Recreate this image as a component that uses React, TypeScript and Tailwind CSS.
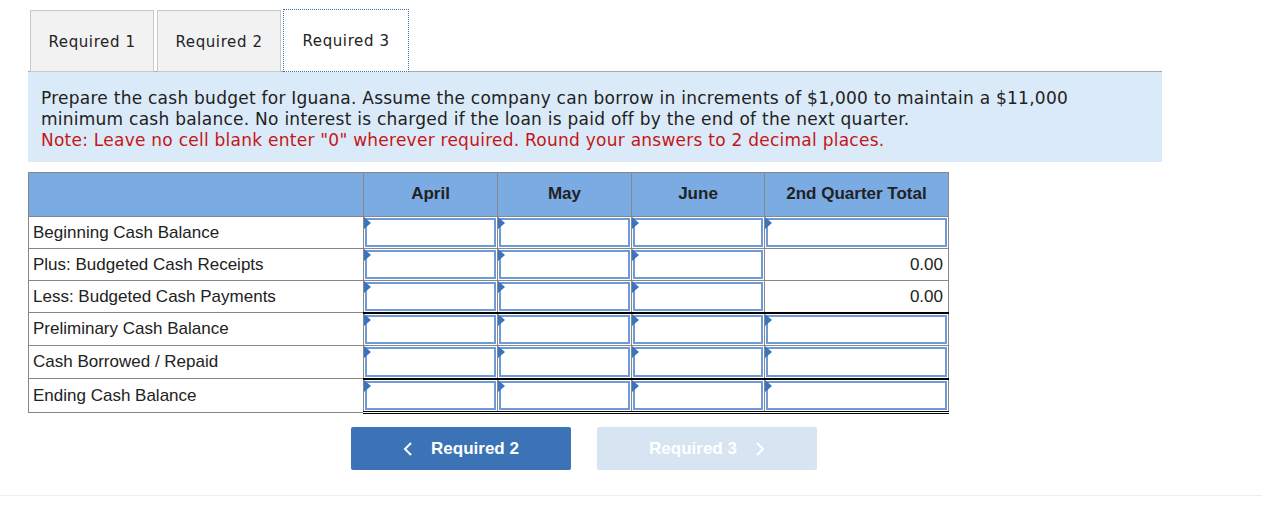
import React from "react";

const verdana = { fontFamily: '"DejaVu Sans", Verdana, sans-serif' };

function Flag() {
  return (
    <span className="absolute left-0 top-0 h-0 w-0 border-y-[6px] border-l-[7px] border-y-transparent border-l-[#3a73c0]" />
  );
}

function InputCell() {
  return (
    <div className="relative h-full p-px">
      <div className="h-full border-2 border-[#6e9ad8] bg-white" />
      <Flag />
    </div>
  );
}

const rows: { label: string; total: string | null; top?: boolean; h: string }[] = [
  { label: "Beginning Cash Balance", total: null, h: "h-[32px]" },
  { label: "Plus: Budgeted Cash Receipts", total: "0.00", h: "h-[32px]" },
  { label: "Less: Budgeted Cash Payments", total: "0.00", h: "h-[32px]" },
  { label: "Preliminary Cash Balance", total: null, top: true, h: "h-[33px]" },
  { label: "Cash Borrowed / Repaid", total: null, h: "h-[33px]" },
  { label: "Ending Cash Balance", total: null, top: true, h: "h-[34px]" },
];

export default function App() {
  return (
    <div className="relative min-h-[506px] w-[1262px] bg-white" style={{ fontFamily: '"Liberation Sans", Arial, sans-serif' }}>
      <div className="pl-[28px] pr-[100px] pt-[10px]">
        {/* tabs */}
        <div className="flex h-[62px] items-end border-b border-[#a9a9a9] pl-[2px] tracking-[0.6px]" style={verdana}>
          <div className="mb-[-1px] flex h-[62px] w-[124px] items-center justify-center border border-[#c9c9c9] bg-[#f2f2f2] pt-[3px] text-[15px] text-[#222]">
            Required 1
          </div>
          <div className="mb-[-1px] ml-[3px] flex h-[62px] w-[124px] items-center justify-center border border-[#c9c9c9] bg-[#f2f2f2] pt-[3px] text-[15px] text-[#222]">
            Required 2
          </div>
          <div className="mb-[-1px] ml-[2px] flex h-[63px] w-[126px] items-center justify-center border border-dotted border-[#3a6fb5] bg-white pt-[2px] text-[15px] text-[#222]">
            Required 3
          </div>
        </div>

        {/* instructions */}
        <div className="h-[90px] bg-[#dbeaf8] px-[13px] pt-[16px] text-[17px] leading-[21px] tracking-[0.25px] text-[#222]" style={verdana}>
          <p>
            Prepare the cash budget for Iguana. Assume the company can borrow in increments of $1,000 to maintain a $11,000
            <br />
            minimum cash balance. No interest is charged if the loan is paid off by the end of the next quarter.
          </p>
          <p className="text-[#c41616]">
            Note: Leave no cell blank enter "0" wherever required. Round your answers to 2 decimal places.
          </p>
        </div>

        {/* table */}
        <table className="mt-[10px] w-[920px] table-fixed border-collapse text-[17px] text-[#222]">
          <colgroup>
            <col className="w-[335px]" />
            <col className="w-[134px]" />
            <col className="w-[134px]" />
            <col className="w-[133px]" />
            <col className="w-[184px]" />
          </colgroup>
          <thead>
            <tr className="h-[44px] bg-[#7aabe2]">
              <th className="border border-[#888]" />
              {["April", "May", "June", "2nd Quarter Total"].map((h) => (
                <th key={h} className="border border-[#888] pb-[2px] align-middle font-bold">
                  {h}
                </th>
              ))}
            </tr>
          </thead>
          <tbody>
            {rows.map((r, i) => {
              const cellCls =
                r.h +
                " border border-[#888] p-0 " +
                (r.top ? "border-t-2 border-t-black " : "") +
                (i === 5 ? "border-b-[3px] border-double border-b-black" : "");
              return (
                <tr key={r.label} className={r.h}>
                  <td className="border border-[#888] pl-[4px] align-middle">{r.label}</td>
                  {[0, 1, 2].map((c) => (
                    <td key={c} className={cellCls}>
                      <InputCell />
                    </td>
                  ))}
                  <td className={cellCls}>
                    {r.total ? <div className="pr-[5px] text-right">{r.total}</div> : <InputCell />}
                  </td>
                </tr>
              );
            })}
          </tbody>
        </table>

        {/* nav buttons */}
        <div className="mt-[13px] flex gap-[26px] pl-[323px]">
          <button className="flex h-[43px] w-[220px] items-center justify-center gap-[18px] rounded-[2px] bg-[#3b73b6] text-[17px] font-bold text-white">
            <svg width="10" height="16" viewBox="0 0 10 16" fill="none" stroke="white" strokeWidth="2">
              <path d="M8 2 2 8l6 6" />
            </svg>
            Required 2
          </button>
          <button className="flex h-[43px] w-[220px] items-center justify-center gap-[18px] rounded-[2px] bg-[#d7e4f2] text-[17px] font-bold text-white">
            Required 3
            <svg width="10" height="16" viewBox="0 0 10 16" fill="none" stroke="white" strokeWidth="2">
              <path d="m2 2 6 6-6 6" />
            </svg>
          </button>
        </div>
      </div>
      <div className="absolute left-0 right-0 top-[495px] h-px bg-[#eeeeee]" />
    </div>
  );
}
